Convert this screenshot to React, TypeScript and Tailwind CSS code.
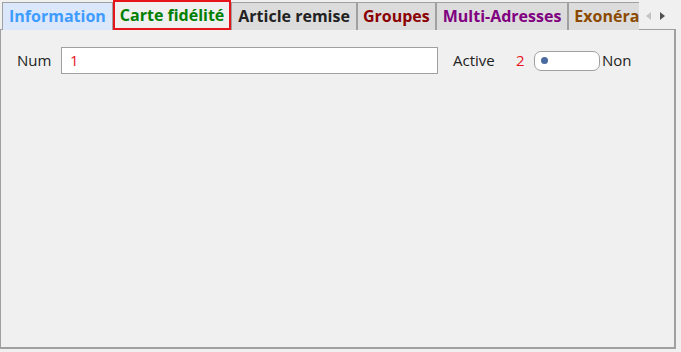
import React from "react";

const tabs = [
    { label: "Information", color: "text-[#3f9cff]", bg: "bg-[#dbe7fb]", pad: "px-[6px]" },
    { label: "Carte fidélité", color: "text-[#008000]", pad: "px-[5px]", active: true },
    { label: "Article remise", color: "text-[#222222]", bg: "bg-[#dcdcdc]", pad: "px-[6px]" },
    { label: "Groupes", color: "text-[#8b0000]", bg: "bg-[#dcdcdc]", pad: "px-[5px]" },
    { label: "Multi-Adresses", color: "text-[#800080]", bg: "bg-[#dcdcdc]", pad: "px-[6px]" },
    { label: "Exonération", color: "text-[#8b4a00]", bg: "bg-[#dcdcdc]", pad: "px-[5px]" },
];

export default function App() {
    return (
        <div className="w-[681px] h-[352px] bg-[#f0f0f0] font-['Open_Sans',sans-serif] overflow-hidden">
            {/* Tab strip */}
            <div className="flex h-[30px] w-[677px] relative">
                <div className="flex w-[639px] overflow-hidden pt-[2px] pl-[2px]">
                    {tabs.map((tab) =>
                        tab.active ? (
                            <div
                                key={tab.label}
                                className={`-mt-[2px] h-[30px] shrink-0 border-2 border-[#e8141c] bg-[#f0f0f0] text-[16px] font-bold leading-[26px] whitespace-nowrap ${tab.pad} ${tab.color}`}
                            >
                                {tab.label}
                            </div>
                        ) : (
                            <div
                                key={tab.label}
                                className={`h-[28px] shrink-0 border border-[#a0a0a0] border-b-0 text-[16px] font-bold leading-[26px] whitespace-nowrap ${tab.pad} ${tab.bg} ${tab.color}`}
                            >
                                {tab.label}
                            </div>
                        )
                    )}
                </div>
                <div className="flex items-center gap-[9px] pl-[7px] pt-[1px]">
                    <svg width="5" height="8" viewBox="0 0 5 8"><path d="M5 0 L0 4 L5 8 Z" fill="#c4c4c4" /></svg>
                    <svg width="5" height="8" viewBox="0 0 5 8"><path d="M0 0 L5 4 L0 8 Z" fill="#505050" /></svg>
                </div>
            </div>

            {/* Panel */}
            <div className="w-[676px] h-[320px] -mt-[1px] border border-[#a0a0a0] border-r-2 border-b-2 bg-[#f0f0f0]">
                <div className="flex items-center pt-[17px] pl-[16px] text-[15px] text-[#222]">
                    <span className="w-[44px]">Num</span>
                    <div className="h-[27px] w-[377px] border border-[#a0a0a0] bg-white px-[8px] leading-[25px] text-[#e8141c]">
                        1
                    </div>
                    <span className="ml-[15px] w-[63px]">Active</span>
                    <span className="w-[18px] text-[#e8141c]">2</span>
                    <div className="flex h-[20px] w-[66px] items-center rounded-[7px] border border-[#a0a0a0] bg-white pl-[6px]">
                        <span className="h-[7px] w-[7px] rounded-full bg-[#4a6aa0]" />
                    </div>
                    <span className="ml-[2px]">Non</span>
                </div>
            </div>
        </div>
    );
}
